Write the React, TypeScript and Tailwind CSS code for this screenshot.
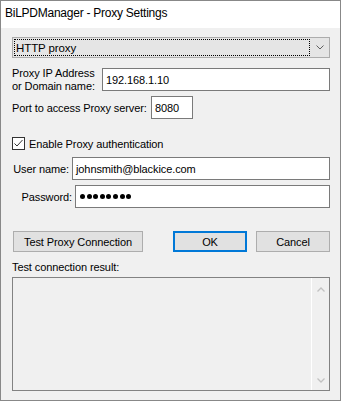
export default function App() {
  return (
    <div className="w-[341px] h-[401px] border border-[#888888] bg-[#f0f0f0] flex flex-col font-['Liberation_Sans',Arial,sans-serif] text-[11px] leading-[14px] text-black whitespace-nowrap tracking-[-0.1px]">
      <div className="h-[27px] shrink-0 bg-white pl-[4px] pt-[5px] text-[12px] tracking-[-0.25px]">BiLPDManager - Proxy Settings</div>

      <div className="flex flex-col pl-[11px] pr-[10px]">
        {/* proxy type combo */}
        <div className="mt-[9px] h-[21px] flex border border-[#acacac] bg-[#e5e5e5]">
          <div className="flex-1 m-[1px] border border-dotted border-black flex items-center pl-[1px] text-[11.5px]">
            HTTP proxy
          </div>
          <div className="w-[18px] flex items-center justify-center">
            <svg width="8" height="5" viewBox="0 0 8 5" fill="none">
              <path d="M0.5 0.5 L4 4 L7.5 0.5" stroke="#606060" strokeWidth="1" />
            </svg>
          </div>
        </div>

        <div className="mt-[10px] h-[23px] flex items-start">
          <div className="w-[90px] -mt-[1px] leading-[13px]">
            Proxy IP Address
            <br />
            or Domain name:
          </div>
          <div className="flex-1 h-[23px] border border-[#7a7a7a] bg-white flex items-center pl-[3px]">
            192.168.1.10
          </div>
        </div>

        <div className="mt-[5px] flex items-center">
          <div className="w-[139px]">Port to access Proxy server:</div>
          <div className="w-[42px] h-[23px] border border-[#7a7a7a] bg-white flex items-center pl-[3px]">8080</div>
        </div>

        <div className="mt-[18px] h-[13px] flex items-center gap-[4px]">
          <div className="w-[13px] h-[13px] border border-[#333333] bg-white flex items-center justify-center">
            <svg width="11" height="11" viewBox="0 0 11 11" fill="none">
              <path d="M1.5 5.5 L4 8 L9.5 2" stroke="#333333" strokeWidth="1" />
            </svg>
          </div>
          <span>Enable Proxy authentication</span>
        </div>

        <div className="mt-[7px] flex items-center">
          <div className="w-[60px] text-right pr-[3px]">User name:</div>
          <div className="flex-1 h-[23px] border border-[#7a7a7a] bg-white flex items-center pl-[3px]">
            johnsmith@blackice.com
          </div>
        </div>

        <div className="mt-[5px] flex items-center">
          <div className="w-[63px] text-right pr-[3px]">Password:</div>
          <div className="flex-1 h-[23px] border border-[#7a7a7a] bg-white flex items-center pl-[4px] gap-[1.6px]">
            {[0, 1, 2, 3, 4, 5, 6, 7].map((i) => (
              <span key={i} className="w-[5px] h-[5px] rounded-full bg-black" />
            ))}
          </div>
        </div>

        <div className="mt-[23px] flex items-center">
          <button className="ml-[1px] w-[130px] h-[21px] border border-[#adadad] bg-[#e1e1e1]">
            Test Proxy Connection
          </button>
          <button className="ml-[30px] w-[74px] h-[21px] border-2 border-[#0078d7] bg-[#e1e1e1]">OK</button>
          <button className="ml-[9px] w-[74px] h-[21px] border border-[#adadad] bg-[#e1e1e1]">Cancel</button>
        </div>

        <div className="mt-[8px]">Test connection result:</div>

        <div className="mt-[3px] h-[114px] border border-[#828282] bg-[#f0f0f0] flex justify-end">
          <div className="w-[18px] border-l border-white flex flex-col items-center justify-between pt-[9px] pb-[7px]">
            <svg width="8" height="5" viewBox="0 0 8 5" fill="none">
              <path d="M0.5 4.5 L4 1 L7.5 4.5" stroke="#c2c2c2" strokeWidth="1.3" />
            </svg>
            <svg width="8" height="5" viewBox="0 0 8 5" fill="none">
              <path d="M0.5 0.5 L4 4 L7.5 0.5" stroke="#c2c2c2" strokeWidth="1.3" />
            </svg>
          </div>
        </div>
      </div>
    </div>
  );
}
